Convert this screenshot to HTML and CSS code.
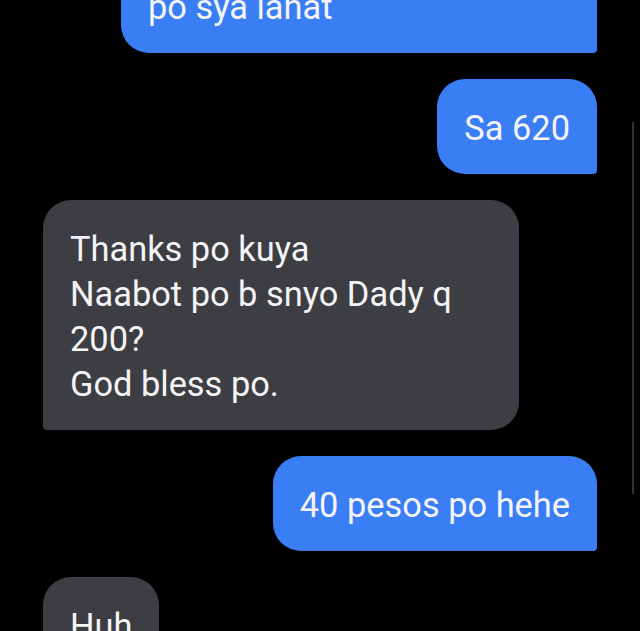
FILE: index.html
```html
<!DOCTYPE html>
<html>
<head>
<meta charset="utf-8">
<link rel="stylesheet" href="styles.css">
</head>
<body>
<div class="thread">
  <div class="msg out full">po sya lahat</div>
  <div class="msg out">Sa 620</div>
  <div class="msg in full">Thanks po kuya<br>Naabot po b snyo Dady q<br>200?<br>God bless po.</div>
  <div class="msg out">40 pesos po hehe</div>
  <div class="msg in first">Huh</div>
</div>
<div class="scrollbar"></div>
</body>
</html>
```

FILE: styles.css
```css
html, body {
  margin: 0;
  padding: 0;
  background: #000;
  height: 631px;
  overflow: hidden;
}
body {
  position: relative;
  font-family: Roboto, "Noto Sans", sans-serif;
}
.thread {
  display: flex;
  flex-direction: column;
  gap: 26px;
  padding: 0 43px;
  margin-top: -42px;
}
.msg {
  box-sizing: border-box;
  max-width: 476px;
  padding: 27px 27px 23px 27px;
  font-size: 34.4px;
  line-height: 45px;
  color: #f4f4f6;
  border-radius: 28px;
}
.msg.full {
  width: 476px;
}
.out {
  align-self: flex-end;
  background: #3a7ef6;
  border-bottom-right-radius: 4px;
}
.in {
  align-self: flex-start;
  background: #3d3e44;
  border-bottom-left-radius: 4px;
}
.in.first {
  border-bottom-left-radius: 28px;
}
.scrollbar {
  position: absolute;
  left: 632px;
  top: 122px;
  width: 2px;
  height: 372px;
  background: #333336;
}
```
